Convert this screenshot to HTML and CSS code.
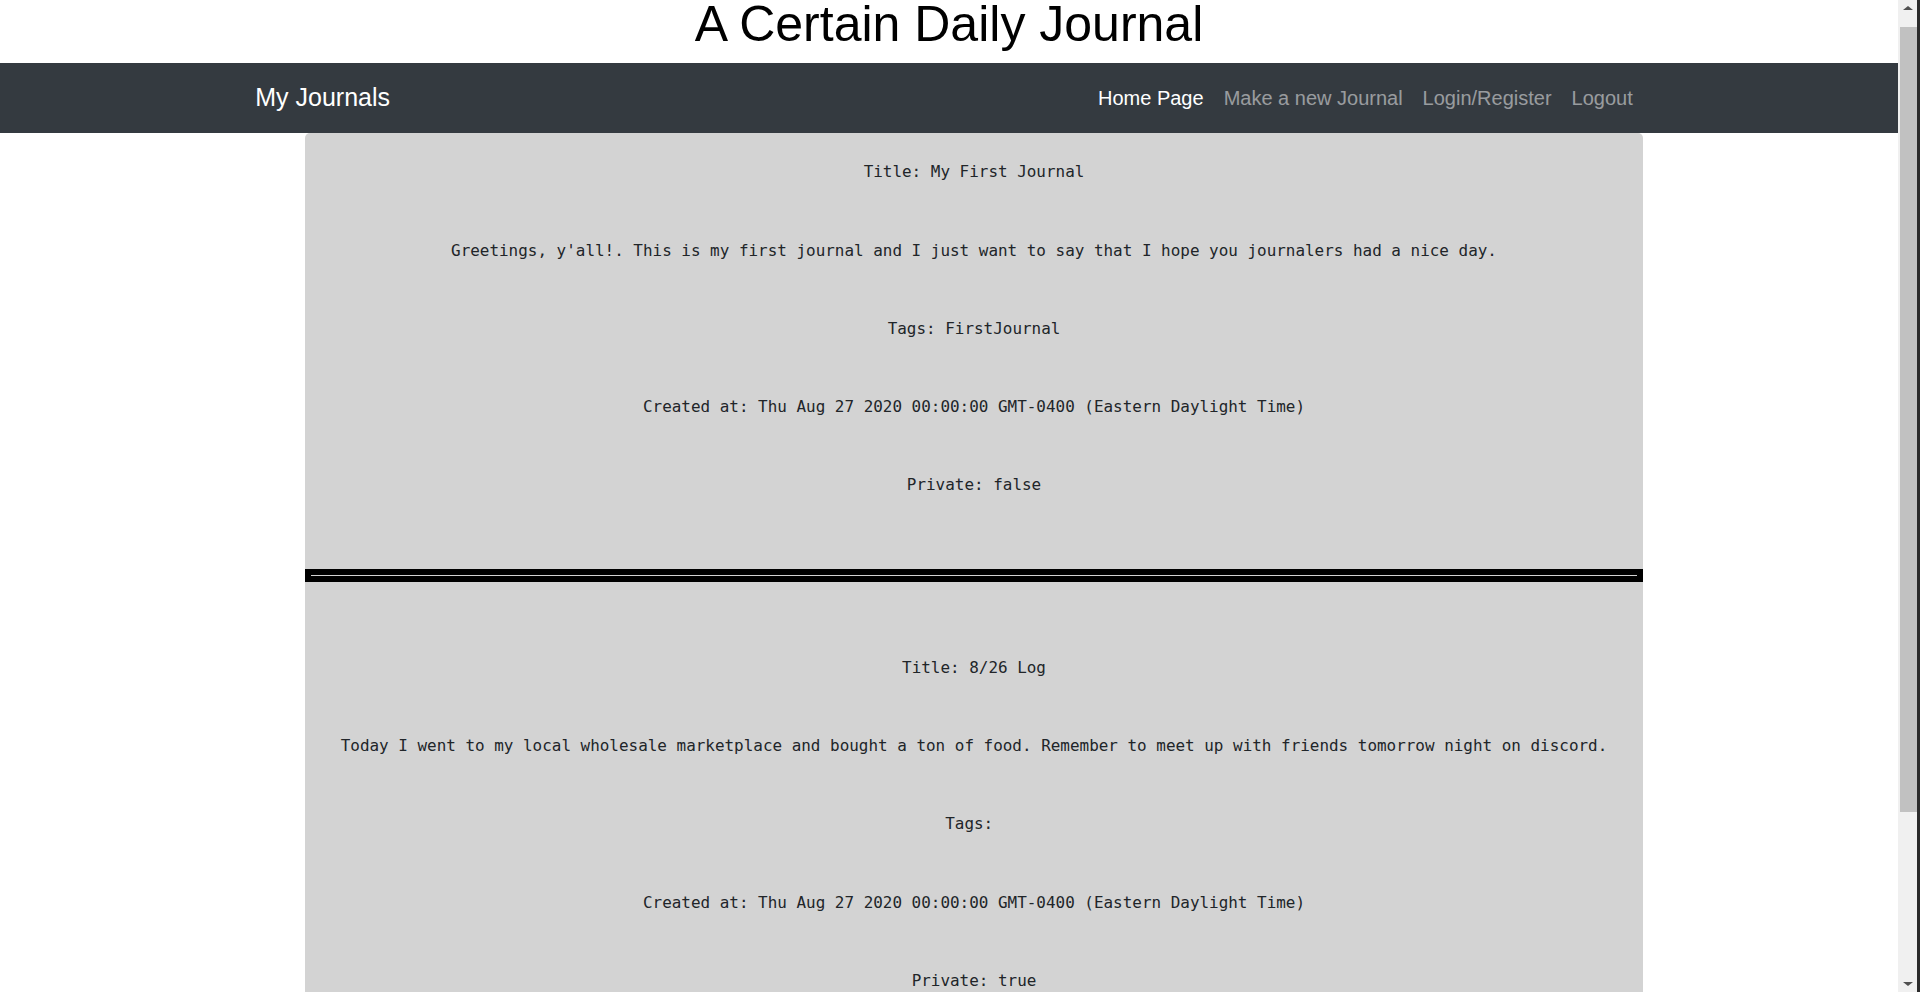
FILE: index.html
```html
<!DOCTYPE html>
<html lang="en">
<head>
<meta charset="utf-8">
<title>A Certain Daily Journal</title>
<link rel="stylesheet" href="styles.css">
</head>
<body>
  <div class="page">
    <header class="site-header">
      <h1 class="site-title">A Certain Daily Journal</h1>
    </header>
    <nav class="navbar">
      <div class="nav-container">
        <a class="brand" href="#">My Journals</a>
        <ul class="nav-links">
          <li><a class="nav-link active" href="#">Home Page</a></li>
          <li><a class="nav-link" href="#">Make a new Journal</a></li>
          <li><a class="nav-link" href="#">Login/Register</a></li>
          <li><a class="nav-link" href="#">Logout</a></li>
        </ul>
      </div>
    </nav>
    <main class="journals">
      <section class="entry">
        <p class="field">Title: My First Journal</p>
        <p class="field">Greetings, y'all!. This is my first journal and I just want to say that I hope you journalers had a nice day.</p>
        <p class="field">Tags: FirstJournal</p>
        <p class="field">Created at: Thu Aug 27 2020 00:00:00 GMT-0400 (Eastern Daylight Time)</p>
        <p class="field">Private: false</p>
      </section>
      <hr class="divider">
      <section class="entry">
        <p class="field">Title: 8/26 Log</p>
        <p class="field">Today I went to my local wholesale marketplace and bought a ton of food. Remember to meet up with friends tomorrow night on discord.</p>
        <p class="field">Tags: </p>
        <p class="field">Created at: Thu Aug 27 2020 00:00:00 GMT-0400 (Eastern Daylight Time)</p>
        <p class="field">Private: true</p>
      </section>
    </main>
  </div>
  <div class="scrollbar" aria-hidden="true">
    <span class="scroll-arrow up"></span>
    <span class="scroll-thumb"></span>
    <span class="scroll-arrow down"></span>
  </div>
</body>
</html>
```
FILE: styles.css
```css
html, body {
  margin: 0;
  padding: 0;
}

body {
  background: #ffffff;
  color: #212529;
  font-family: "Liberation Sans", Arial, sans-serif;
}

.page {
  width: 1898px;
}

.site-header {
  text-align: center;
  margin-bottom: 14px;
}

.site-title {
  margin: 0;
  font-size: 50px;
  font-weight: 400;
  line-height: 49px;
  color: #000;
}

.navbar {
  background: #343a40;
  height: 70px;
  display: flex;
  align-items: center;
}

.nav-container {
  width: 1425px;
  margin: 0 auto;
  padding: 0 18.75px;
  box-sizing: border-box;
  display: flex;
  align-items: center;
  justify-content: space-between;
}

.brand {
  color: #fff;
  font-size: 25px;
  line-height: 37.5px;
  text-decoration: none;
}

.nav-links {
  list-style: none;
  margin: 0;
  padding: 0;
  display: flex;
}

.nav-link {
  display: block;
  padding: 0 10px;
  font-size: 20px;
  line-height: 30px;
  color: rgba(255, 255, 255, 0.5);
  text-decoration: none;
}

.nav-link.active {
  color: #fff;
}

.journals {
  width: 1338px;
  margin-left: 305px;
  background: #d3d3d3;
  border-radius: 5px 5px 0 0;
  padding-bottom: 60px;
}

.entry {
  display: flex;
  flex-direction: column;
}

.field {
  margin: 0;
  padding: 27.3px 0 27px;
  line-height: 24px;
  text-align: center;
  font-family: "DejaVu Sans Mono", "Liberation Mono", monospace;
  font-size: 15.95px;
  color: #212529;
  white-space: pre;
}

.divider {
  margin: 44.5px 0 46.5px;
  height: 1px;
  border: 6px solid #000;
  background: transparent;
  box-sizing: content-box;
}

/* window scrollbar as seen in the screenshot */
.scrollbar {
  position: fixed;
  top: 0;
  right: 0;
  width: 22px;
  height: 100%;
  background: #f0f0f0;
  border-right: 3px solid #2b2b2b;
  box-sizing: border-box;
}

.scroll-thumb {
  position: absolute;
  top: 27px;
  left: 2px;
  width: 17px;
  height: 785px;
  background: #c1c1c1;
}

.scroll-arrow {
  position: absolute;
  left: 5px;
  width: 0;
  height: 0;
  border-left: 5px solid transparent;
  border-right: 5px solid transparent;
}

.scroll-arrow.up {
  top: 6px;
  border-bottom: 4px solid #505050;
}

.scroll-arrow.down {
  bottom: 6px;
  border-top: 4px solid #505050;
}
```
